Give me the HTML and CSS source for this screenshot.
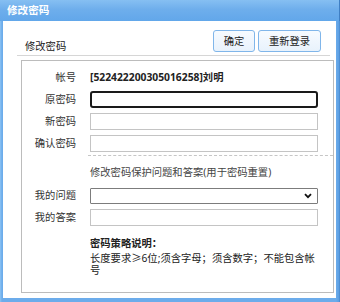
FILE: index.html
```html
<!DOCTYPE html>
<html lang="zh-CN">
<head>
<meta charset="utf-8">
<title>修改密码</title>
<link rel="stylesheet" href="styles.css">
</head>
<body>
<div class="win">
  <div class="titlebar">修改密码</div>
  <div class="content">
    <div class="head">
      <span class="head-title">修改密码</span>
      <div class="btns">
        <button class="btn btn-ok" type="button">确定</button>
        <button class="btn btn-relogin" type="button">重新登录</button>
      </div>
    </div>
    <div class="box">
      <div class="grid">
        <label class="lbl">帐号</label>
        <span class="account">[522422200305016258]刘明</span>
        <label class="lbl">原密码</label>
        <input class="inp inp-focus" type="password">
        <label class="lbl">新密码</label>
        <input class="inp" type="password">
        <label class="lbl">确认密码</label>
        <input class="inp" type="password">
      </div>
      <div class="dash"></div>
      <div class="note">修改密码保护问题和答案(用于密码重置)</div>
      <div class="grid grid2">
        <label class="lbl">我的问题</label>
        <div class="sel-wrap">
          <select class="sel"><option></option></select>
          <svg class="chev" width="8" height="6" viewBox="0 0 8 6"><path d="M1 1.2 L4 4.2 L7 1.2" fill="none" stroke="#111" stroke-width="1.8"/></svg>
        </div>
        <label class="lbl">我的答案</label>
        <input class="inp" type="text">
      </div>
      <div class="policy">
        <div class="policy-title">密码策略说明：</div>
        <div class="policy-text">长度要求≥6位;须含字母；须含数字；不能包含帐号</div>
      </div>
    </div>
  </div>
</div>
</body>
</html>
```

FILE: styles.css
```css
html, body {
  margin: 0;
  padding: 0;
  background: #fff;
}
body {
  font-family: "Noto Sans", "Noto Sans CJK SC", sans-serif;
  font-size: 10.3px;
  color: #222;
}
.win {
  width: 340px;
  height: 302px;
  box-sizing: border-box;
  background: linear-gradient(to right, #8cc3f3 0, #6caceb 2px, #6caceb 336px, #5c9fe3 339px, #3f7fc4 340px);
  display: flex;
  flex-direction: column;
}
.titlebar {
  height: 21px;
  box-sizing: border-box;
  padding: 4px 0 0 7px;
  line-height: 13px;
  color: #fff;
  font-weight: bold;
  font-size: 10.6px;
  background: linear-gradient(to bottom, #86bff2 0%, #6eaeec 45%, #62a7ea 100%);
  border-right: 1px solid #3f7fc4;
}
.content {
  flex: 1;
  background: #fff;
  margin: 0 4px 4px 3px;
  display: flex;
  flex-direction: column;
  position: relative;
}
.head {
  height: 35px;
  box-sizing: border-box;
  margin: 0 6px 0 14px;
  padding: 0 9px 3px 8px;
  border-bottom: 1px solid #d6d6d6;
  display: flex;
  align-items: flex-end;
  justify-content: space-between;
}
.head-title {
  line-height: 14px;
  margin-bottom: -1px;
  color: #1a1a1a;
}
.btns {
  display: flex;
  gap: 3px;
}
.btn {
  height: 22px;
  box-sizing: border-box;
  border: 1px solid #80b6ea;
  border-radius: 3px;
  background: linear-gradient(to bottom, #f7fbff, #e8f2fc);
  font-family: inherit;
  font-size: 10.3px;
  color: #222;
  padding: 0;
  line-height: 18px;
}
.btn-ok { width: 42px; }
.btn-relogin { width: 63px; }
.box {
  margin: 4px 2px 0 18px;
  height: 233px;
  box-sizing: border-box;
  border: 1px solid #bcbcbc;
  padding-top: 8px;
}
.grid {
  display: grid;
  grid-template-columns: 54px 228px;
  column-gap: 14px;
  row-gap: 5px;
  align-items: center;
}
.lbl {
  text-align: right;
  color: #333;
  line-height: 17px;
}
.account {
  font-weight: bold;
  line-height: 17px;
  color: #222;
}
.inp {
  height: 17px;
  width: 228px;
  box-sizing: border-box;
  border: 1px solid #c4c4c4;
  margin: 0;
  padding: 0 3px;
  font-family: inherit;
  font-size: 10.3px;
  background: #fff;
  outline: none;
}
.inp-focus {
  border: 2px solid #1a1a1a;
  border-radius: 3px;
}
.dash {
  margin: 3px 0 0 66px;
  border-top: 1px dashed #c6c6c6;
}
.note {
  margin: 9px 0 0 68px;
  line-height: 14px;
  color: #444;
}
.grid2 {
  margin-top: 8px;
}
.sel-wrap {
  position: relative;
  height: 16px;
}
.sel {
  appearance: none;
  -webkit-appearance: none;
  width: 228px;
  height: 16px;
  box-sizing: border-box;
  border: 1px solid #7c7c7c;
  border-radius: 1px;
  background: #fff;
  margin: 0;
  padding: 0 3px;
  font-family: inherit;
  font-size: 10.3px;
  outline: none;
}
.chev {
  position: absolute;
  right: 6px;
  top: 5px;
}
.policy {
  margin: 11px 0 0 68px;
  width: 234px;
  color: #222;
}
.policy-title {
  font-weight: bold;
  line-height: 13px;
}
.policy-text {
  line-height: 12px;
  margin-top: 2px;
}
```
